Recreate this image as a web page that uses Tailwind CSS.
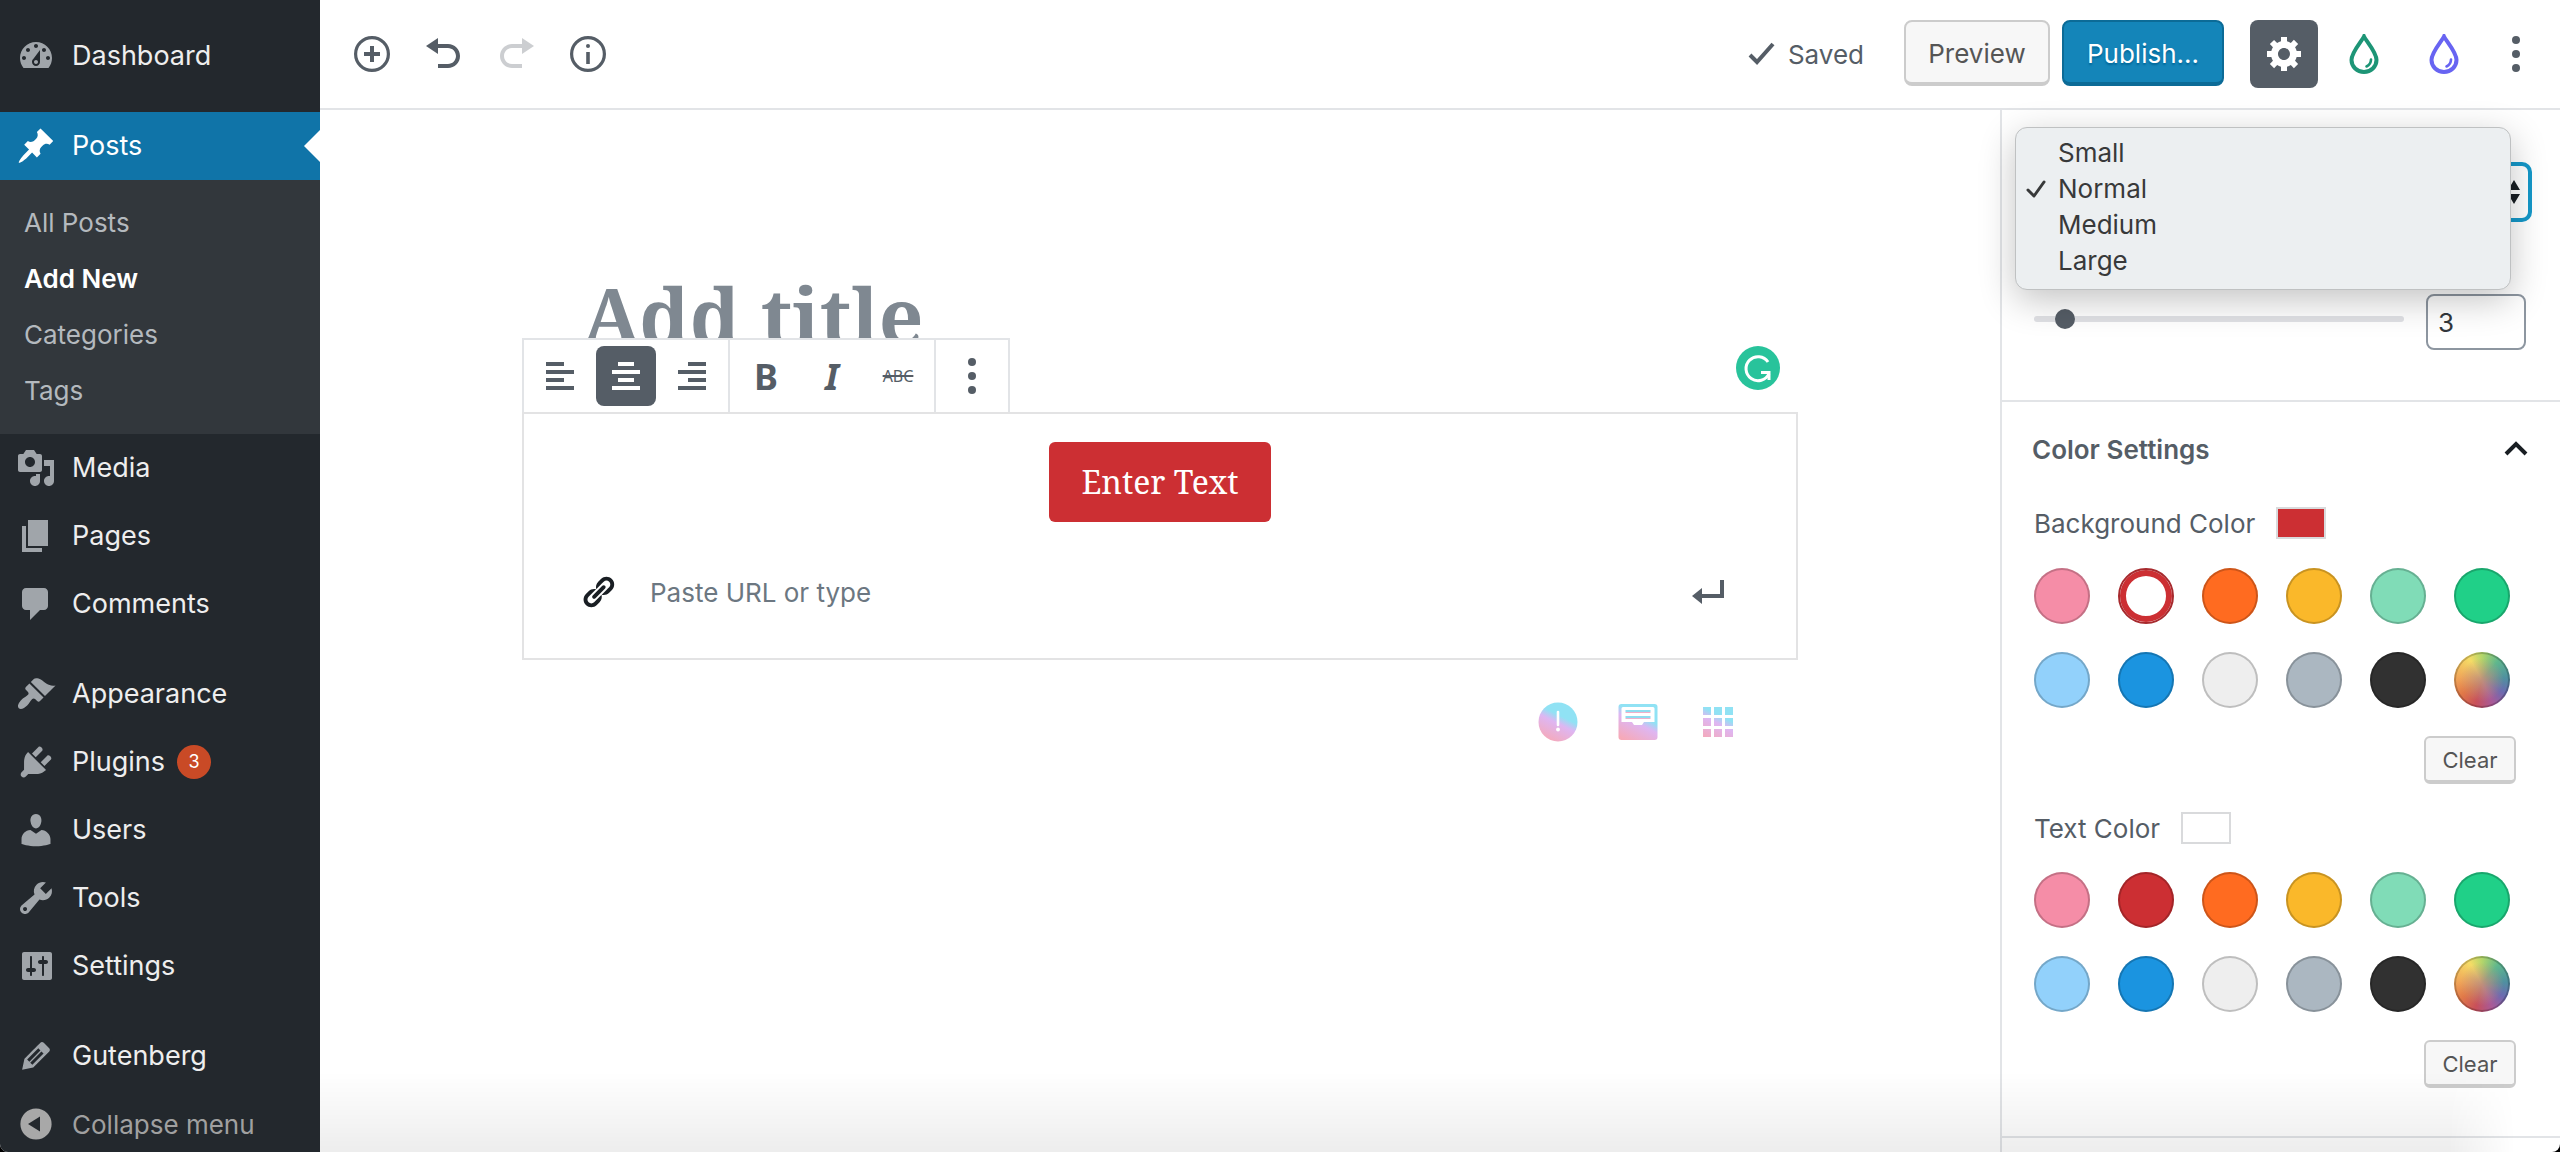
<!DOCTYPE html>
<html lang="en">
<head>
<meta charset="utf-8">
<title>Add New Post</title>
<script src="https://cdn.jsdelivr.net/npm/@tailwindcss/browser@4"></script>
</head>
<body class="h-screen overflow-hidden bg-black font-['Inter',sans-serif] text-[26px] text-[#555d66]">
<div class="flex h-full overflow-hidden rounded-b-lg bg-white">

  <!-- Admin menu -->
  <nav class="w-[320px] shrink-0 overflow-hidden bg-[#23282d] pt-[22px] text-[27px] text-[#eee]" aria-label="Main menu">
    <a href="#" class="mb-[22px] flex h-[68px] items-center gap-4 pl-4">
      <svg class="size-10 fill-[#a0a5aa]" viewBox="0 0 20 20"><path fill-rule="evenodd" d="M3.76 16h12.48c1.1-1.37 1.76-3.11 1.76-5 0-4.42-3.58-8-8-8s-8 3.58-8 8c0 1.89.66 3.63 1.76 5zM10 4c.55 0 1 .45 1 1s-.45 1-1 1-1-.45-1-1 .45-1 1-1zM6 6c.55 0 1 .45 1 1s-.45 1-1 1-1-.45-1-1 .45-1 1-1zm8 0c.55 0 1 .45 1 1s-.45 1-1 1-1-.45-1-1 .45-1 1-1zm-5.37 5.55L12 7v6c0 1.1-.9 2-2 2s-2-.9-2-2c0-.57.24-1.08.63-1.45zM4 10c.55 0 1 .45 1 1s-.45 1-1 1-1-.45-1-1 .45-1 1-1zm12 0c.55 0 1 .45 1 1s-.45 1-1 1-1-.45-1-1 .45-1 1-1zm-5 3c0-.55-.45-1-1-1s-1 .45-1 1 .45 1 1 1 1-.45 1-1z"/></svg>
      Dashboard
    </a>
    <a href="#" class="relative flex h-[68px] items-center gap-4 bg-[#1074a8] pl-4 text-white">
      <svg class="size-10 fill-white" viewBox="0 0 20 20"><path d="M10.44 3.02l1.82-1.82 6.36 6.35-1.83 1.82c-1.05-.68-2.48-.57-3.41.36l-.75.75c-.92.93-1.04 2.35-.35 3.41l-1.83 1.82-2.41-2.41-2.8 2.79c-.42.42-3.38 2.71-3.8 2.29s1.86-3.39 2.28-3.81l2.79-2.79L4.1 9.36l1.83-1.82c1.05.69 2.48.57 3.4-.36l.75-.75c.93-.92 1.05-2.35.36-3.41z"/></svg>
      Posts
      <span class="absolute top-[18px] right-0 border-y-[16px] border-r-[16px] border-y-transparent border-r-white"></span>
    </a>
    <div class="flex flex-col bg-[#32373c] pt-[15px] pb-[15px] pl-6 text-[26px] leading-[56px] text-[#b4b9be]">
      <a href="#">All Posts</a>
      <a href="#" class="font-semibold text-white">Add New</a>
      <a href="#">Categories</a>
      <a href="#">Tags</a>
    </div>
    <a href="#" class="flex h-[68px] items-center gap-4 pl-4">
      <svg class="size-10 fill-[#a0a5aa]" viewBox="0 0 20 20"><path fill-rule="evenodd" d="M13 11V4c0-.55-.45-1-1-1h-1.67L9 1H5L3.67 3H2c-.55 0-1 .45-1 1v7c0 .55.45 1 1 1h10c.55 0 1-.45 1-1zM7 4.5c1.38 0 2.5 1.12 2.5 2.5S8.38 9.5 7 9.5 4.5 8.38 4.5 7 5.62 4.5 7 4.5zM14 6h5v10.5c0 1.38-1.12 2.5-2.5 2.5S14 17.88 14 16.5s1.12-2.5 2.5-2.5c.17 0 .34.02.5.05V9h-3V6zm-4 8.05V13h2v3.5c0 1.38-1.12 2.5-2.5 2.5S7 17.88 7 16.5 8.12 14 9.5 14c.17 0 .34.02.5.05z"/></svg>
      Media
    </a>
    <a href="#" class="flex h-[68px] items-center gap-4 pl-4">
      <svg class="size-10 fill-[#a0a5aa]" viewBox="0 0 20 20"><path d="M6 15V2h10v13H6zm-1 1h8v2H3V5h2v11z"/></svg>
      Pages
    </a>
    <a href="#" class="mb-[22px] flex h-[68px] items-center gap-4 pl-4">
      <svg class="size-10 fill-[#a0a5aa]" viewBox="0 0 20 20"><path d="M5 2h9c1.1 0 2 .9 2 2v7c0 1.1-.9 2-2 2h-2l-5 5v-5H5c-1.1 0-2-.9-2-2V4c0-1.1.9-2 2-2z"/></svg>
      Comments
    </a>
    <a href="#" class="flex h-[68px] items-center gap-4 pl-4">
      <svg class="size-10 fill-[#a0a5aa]" viewBox="0 0 20 20"><path d="M14.48 11.06L7.41 3.99l1.5-1.5c.5-.56 2.3-.47 3.51.32 1.21.8 1.43 1.28 2.91 2.1 1.18.64 2.45 1.26 4.45.85zm-.71.71L6.7 4.7 4.93 6.47c-.39.39-.39 1.02 0 1.41l1.06 1.06c.39.39.39 1.03 0 1.42-.6.6-1.43 1.11-2.21 1.69-.35.26-.7.53-1.01.84C1.43 14.23.4 16.08 1.4 17.07c.99 1 2.84-.03 4.18-1.36.31-.31.58-.66.85-1.02.57-.78 1.08-1.61 1.69-2.21.39-.39 1.02-.39 1.41 0l1.06 1.06c.39.39 1.02.39 1.41 0z"/></svg>
      Appearance
    </a>
    <a href="#" class="flex h-[68px] items-center gap-4 pl-4">
      <svg class="size-10 fill-[#a0a5aa]" viewBox="0 0 20 20"><path d="M13.11 4.36L9.87 7.6 8 5.73l3.24-3.24c.35-.34 1.05-.2 1.56.32.52.51.66 1.21.31 1.55zm-8 1.77l.91-1.12 9.01 9.01-1.19.84c-.71.71-2.63 1.16-3.82 1.16H6.14L4.9 17.26c-.59.59-1.54.59-2.12 0-.59-.58-.59-1.53 0-2.12l1.24-1.24v-3.88c0-1.13.4-3.19 1.09-3.89zm7.26 3.97l3.24-3.24c.34-.35 1.04-.21 1.55.31.52.51.66 1.21.31 1.55l-3.24 3.25z"/></svg>
      <span class="flex items-center gap-3">Plugins <span class="size-[34px] rounded-full bg-[#c94a26] text-center text-[18px] leading-[34px] text-white">3</span></span>
    </a>
    <a href="#" class="flex h-[68px] items-center gap-4 pl-4">
      <svg class="size-10 fill-[#a0a5aa]" viewBox="0 0 20 20"><path d="M10 9.25c-2.27 0-2.73-3.44-2.73-3.44C7 4.02 7.82 2 9.97 2c2.16 0 2.98 2.02 2.71 3.81 0 0-.41 3.44-2.68 3.44zm0 2.57L12.72 10c2.39 0 4.52 2.33 4.52 4.53v2.49s-3.65 1.13-7.24 1.13c-3.65 0-7.24-1.13-7.24-1.13v-2.49c0-2.25 1.94-4.48 4.47-4.48z"/></svg>
      Users
    </a>
    <a href="#" class="flex h-[68px] items-center gap-4 pl-4">
      <svg class="size-10 fill-[#a0a5aa]" viewBox="0 0 20 20"><path fill-rule="evenodd" d="M16.68 9.77c-1.34 1.34-3.3 1.67-4.95.99l-5.41 6.52c-.99.99-2.59.99-3.58 0s-.99-2.59 0-3.57l6.52-5.42c-.68-1.65-.35-3.61.99-4.95 1.28-1.28 3.12-1.62 4.72-1.06l-2.89 2.89 2.82 2.82 2.86-2.87c.53 1.58.18 3.39-1.08 4.65zM3.81 16.21c.4.39 1.04.39 1.43 0 .4-.4.4-1.04 0-1.43-.39-.4-1.03-.4-1.43 0-.39.39-.39 1.03 0 1.43z"/></svg>
      Tools
    </a>
    <a href="#" class="mb-[22px] flex h-[68px] items-center gap-4 pl-4">
      <svg class="size-10 fill-[#a0a5aa]" viewBox="0 0 20 20"><path fill-rule="evenodd" d="M18 16V4c0-.55-.45-1-1-1H4c-.55 0-1 .45-1 1v12c0 .55.45 1 1 1h13c.55 0 1-.45 1-1zM8 11h1c.55 0 1 .45 1 1s-.45 1-1 1H8v1.5c0 .28-.22.5-.5.5s-.5-.22-.5-.5V13H6c-.55 0-1-.45-1-1s.45-1 1-1h1V5.5c0-.28.22-.5.5-.5s.5.22.5.5V11zm6-2v5.5c0 .28-.22.5-.5.5s-.5-.22-.5-.5V9h-1c-.55 0-1-.45-1-1s.45-1 1-1h1V5.5c0-.28.22-.5.5-.5s.5.22.5.5V7h1c.55 0 1 .45 1 1s-.45 1-1 1h-1z"/></svg>
      Settings
    </a>
    <a href="#" class="flex h-[68px] items-center gap-4 pl-4">
      <svg class="size-10 fill-[#a0a5aa]" viewBox="0 0 20 20"><path fill-rule="evenodd" d="M13.89 3.39l2.71 2.72c.46.46.42 1.24.03 1.64l-8.01 8.02-5.56 1.16 1.16-5.58s7.6-7.63 7.99-8.03c.39-.39 1.22-.39 1.68.07zm-2.73 2.79l-5.59 5.61 1.11 1.11 5.54-5.65zm-2.97 8.23l5.58-5.6-1.07-1.08-5.59 5.6z"/></svg>
      Gutenberg
    </a>
    <button type="button" class="flex h-[68px] w-full items-center gap-4 pl-4 text-[26px] text-[#a0a0a0]">
      <svg class="size-10" viewBox="0 0 20 20"><circle cx="10" cy="10" r="7.8" fill="#a8a8a8"/><path d="M12 6.2v7.6L6 10z" fill="#23282d"/></svg>
      Collapse menu
    </button>
  </nav>

  <div class="relative flex min-w-0 flex-1 flex-col">
    <!-- Top bar -->
    <header class="flex h-[110px] shrink-0 items-start justify-between border-b-2 border-[#e2e4e7] pt-5 pr-[18px] pl-4">
      <div class="flex">
        <button type="button" aria-label="Add block" class="flex h-[68px] w-[72px] items-center justify-center"><svg class="size-10" viewBox="0 0 20 20" fill="none" stroke="#555d66"><circle cx="10" cy="10" r="8.2" stroke-width="1.6"/><path d="M10 6v8M6 10h8" stroke-width="2"/></svg></button>
        <button type="button" aria-label="Undo" class="flex h-[68px] w-[72px] items-center justify-center"><svg class="size-10 fill-[#555d66]" viewBox="0 0 20 20"><path d="M12 5H7V2L1 6l6 4V7h5c2.2 0 4 1.8 4 4s-1.8 4-4 4H7v2h5c3.3 0 6-2.7 6-6s-2.7-6-6-6z"/></svg></button>
        <button type="button" aria-label="Redo" class="flex h-[68px] w-[72px] items-center justify-center"><svg class="size-10 fill-[#ccced1]" viewBox="0 0 20 20"><path d="M8 5h5V2l6 4-6 4V7H8c-2.2 0-4 1.8-4 4s1.8 4 4 4h5v2H8c-3.3 0-6-2.7-6-6s2.7-6 6-6z"/></svg></button>
        <button type="button" aria-label="Content structure" class="flex h-[68px] w-[72px] items-center justify-center"><svg class="size-10" viewBox="0 0 20 20"><circle cx="10" cy="10" r="8.2" stroke-width="1.6" fill="none" stroke="#555d66"/><path d="M9.1 9h1.8v6H9.1z" fill="#555d66"/><circle cx="10" cy="6" r="1" fill="#555d66"/></svg></button>
      </div>
      <div class="flex">
        <span class="mr-10 flex h-[68px] items-center gap-3"><svg class="h-11 w-7" viewBox="0 0 28 44" fill="none" stroke="#555d66" stroke-width="4"><path d="M2 23l7 7L25 12"/></svg>Saved</span>
        <button type="button" class="mr-3 h-[66px] w-[146px] rounded-lg border-2 border-b-4 border-[#ccc] bg-[#f7f7f7] pt-[2px] text-[#555]">Preview</button>
        <button type="button" class="mr-[26px] h-[66px] w-[162px] rounded-lg border-2 border-b-4 border-[#0c6b97] bg-[#1485b9] pt-[2px] text-white [text-shadow:0_2px_2px_#006799]">Publish…</button>
        <button type="button" aria-label="Settings" class="mr-3 flex size-[68px] items-center justify-center rounded-lg bg-[#555d66]"><svg class="size-10 fill-white" viewBox="-0.5 0.5 20 20"><path fill-rule="evenodd" d="M18 12h-2.18c-.17.7-.44 1.35-.81 1.93l1.54 1.54-2.1 2.1-1.54-1.54c-.58.36-1.23.63-1.91.79V19H8v-2.18c-.68-.16-1.33-.43-1.91-.79l-1.54 1.54-2.12-2.12 1.54-1.54c-.36-.58-.63-1.23-.79-1.91H1V9.03h2.17c.16-.7.44-1.35.8-1.94L2.43 5.55l2.1-2.1 1.54 1.54c.58-.37 1.24-.64 1.93-.81V2h3v2.18c.68.16 1.33.43 1.91.79l1.54-1.54 2.12 2.12-1.54 1.54c.36.59.64 1.24.8 1.94H18V12zm-8.5 1.5c1.66 0 3-1.34 3-3s-1.34-3-3-3-3 1.34-3 3 1.34 3 3 3z"/></svg></button>
        <button type="button" aria-label="Block styles" class="mr-3 flex size-[68px] items-center justify-center"><svg class="h-10 w-[30px]" viewBox="0 0 30 40" fill="none" stroke="#1d9576"><path d="M15 2.5C13 7 2.5 18 2.5 26a12.5 12 0 0 0 25 0C27.5 18 17 7 15 2.5z" stroke-width="4"/><path d="M22 25.5c0 3-1.5 5.500-4.5 7" stroke-width="2.6" stroke-linecap="round"/></svg></button>
        <button type="button" aria-label="Page styles" class="mr-3 flex size-[68px] items-center justify-center"><svg class="h-10 w-[30px]" viewBox="0 0 30 40" fill="none" stroke="#6864f2"><path d="M15 2.5C13 7 2.5 18 2.5 26a12.5 12 0 0 0 25 0C27.5 18 17 7 15 2.5z" stroke-width="4"/><path d="M22 25.5c0 3-1.5 5.500-4.5 7" stroke-width="2.6" stroke-linecap="round"/></svg></button>
        <button type="button" aria-label="More" class="flex h-[68px] w-[52px] items-center justify-center"><svg class="size-10 fill-[#555d66]" viewBox="0 0 40 40"><circle cx="20" cy="6" r="4"/><circle cx="20" cy="20" r="4"/><circle cx="20" cy="34" r="4"/></svg></button>
      </div>
    </header>

    <div class="flex min-h-0 flex-1">
      <!-- Editor canvas -->
      <main class="flex-1 overflow-hidden pt-[151px]">
        <div class="mx-auto max-w-[1276px]">
          <input type="text" aria-label="Title" placeholder="Add title" class="block h-[108px] w-full pl-[60px] font-['Noto_Serif','DejaVu_Serif',serif] text-[78px] font-bold placeholder:text-[#7f8891] placeholder:opacity-100">
          <div class="relative -mt-[31px] flex items-start justify-between pr-[18px]">
            <div class="flex border-2 border-b-0 border-[#e2e4e7] bg-white" role="toolbar" aria-label="Block tools">
              <div class="flex gap-[6px] border-r-2 border-[#e2e4e7] p-[6px]">
                <button type="button" aria-label="Align left" class="flex size-[60px] items-center justify-center"><svg class="h-7 w-7" viewBox="0 0 28 28" stroke="#555d66" stroke-width="4"><path d="M0 2h18M0 10h28M0 18h18M0 26h28"/></svg></button>
                <button type="button" aria-label="Align center" class="flex size-[60px] items-center justify-center rounded-lg bg-[#555d66]"><svg class="h-7 w-7" viewBox="0 0 28 28" stroke="#fff" stroke-width="4"><path d="M6 2h16M0 10h28M6 18h16M0 26h28"/></svg></button>
                <button type="button" aria-label="Align right" class="flex size-[60px] items-center justify-center"><svg class="h-7 w-7" viewBox="0 0 28 28" stroke="#555d66" stroke-width="4"><path d="M10 2h18M0 10h28M10 18h18M0 26h28"/></svg></button>
              </div>
              <div class="flex gap-[6px] border-r-2 border-[#e2e4e7] p-[6px] font-['Noto_Sans',sans-serif]">
                <button type="button" aria-label="Bold" class="size-[60px] pt-[2px] text-[36px] leading-[58px] font-bold">B</button>
                <button type="button" aria-label="Italic" class="size-[60px] pt-[2px] text-[36px] leading-[58px] font-bold italic">I</button>
                <button type="button" aria-label="Strikethrough" class="size-[60px] text-[16px] leading-[60px] line-through decoration-2">ABC</button>
              </div>
              <div class="p-[6px]">
                <button type="button" aria-label="More options" class="flex size-[60px] items-center justify-center"><svg class="size-10 fill-[#555d66]" viewBox="0 0 40 40"><circle cx="20" cy="6" r="4"/><circle cx="20" cy="20" r="4"/><circle cx="20" cy="34" r="4"/></svg></button>
              </div>
            </div>
            <svg class="mt-2 size-11" viewBox="0 0 44 44"><circle cx="22" cy="22" r="22" fill="#28c39b"/><path d="M32 16A12 12 0 1 0 33 27.5" fill="none" stroke="#fff" stroke-width="3"/><path d="M25 26.5h8V34" fill="none" stroke="#fff" stroke-width="3"/></svg>
          </div>
          <section class="border-2 border-[#e3e3e4] pt-7 pb-[46px]">
            <div class="text-center font-['Noto_Serif','DejaVu_Serif',serif]">
              <button type="button" class="h-20 rounded-md bg-[#cc2f33] px-8 text-[32px] text-white">Enter Text</button>
            </div>
            <form class="mt-[50px] flex items-center gap-[34px] pr-[68px] pl-14">
              <svg class="size-9 fill-[#191e23]" viewBox="0 0 20 20"><path d="M17.74 2.76c1.68 1.69 1.68 4.41 0 6.1l-1.53 1.52c-1.12 1.12-2.7 1.47-4.14 1.09l2.62-2.61.76-.77.76-.76c.84-.84.84-2.2 0-3.04-.84-.85-2.2-.85-3.04 0l-.77.76-3.38 3.38c-.37-1.44-.02-3.02 1.1-4.14l1.52-1.53c1.69-1.68 4.42-1.68 6.1 0zM8.59 13.43l5.34-5.34c.42-.42.42-1.1 0-1.52-.44-.43-1.13-.39-1.53 0l-5.33 5.34c-.42.42-.42 1.1 0 1.52.44.43 1.13.39 1.52 0zm-.76 2.29l4.14-4.15c.38 1.44.03 3.02-1.09 4.14l-1.52 1.53c-1.69 1.68-4.41 1.68-6.1 0-1.68-1.68-1.68-4.42 0-6.1l1.53-1.52c1.12-1.12 2.7-1.47 4.14-1.1l-4.14 4.15c-.85.84-.85 2.2 0 3.05.84.84 2.2.84 3.04 0z"/></svg>
              <input type="text" aria-label="URL" placeholder="Paste URL or type" class="h-10 min-w-0 flex-1 placeholder:text-[#6c7781] placeholder:opacity-100">
              <button type="submit" aria-label="Apply"><svg class="size-10 fill-[#555d66]" viewBox="0 0 20 20"><path d="M16 4h2v9H7v3l-5-4 5-4v3h9V4z"/></svg></button>
            </form>
          </section>
          <div class="mt-[42px] flex justify-end gap-10 pr-[60px]">
            <svg class="size-10" viewBox="0 0 40 40"><defs><linearGradient id="candy" gradientUnits="userSpaceOnUse" x1="30" y1="4" x2="12" y2="40"><stop offset="0.3" stop-color="#90e2f4"/><stop offset="0.5" stop-color="#deb6f2"/><stop offset="1" stop-color="#f6a9b8"/></linearGradient></defs><circle cx="20" cy="20" r="19.5" fill="url(#candy)"/><path d="M20 10v13" stroke="#fff" stroke-width="2.6" stroke-linecap="round"/><circle cx="20" cy="27.5" r="1.9" fill="#fff"/></svg>
            <svg class="size-10" viewBox="0 0 40 40"><rect x="0.5" y="2" width="39" height="36" rx="3" fill="url(#candy)"/><path d="M3.5 6.5a1.5 1.5 0 0 1 1.5-1.5h30a1.5 1.5 0 0 1 1.5 1.5V20H26l-2 3h-8l-2-3H3.5z" fill="#fff"/><path d="M7.5 9h25M7.5 15h25" stroke="#90dcf0" stroke-width="2"/><path d="M7.5 10.5h25M7.5 16.5h25" stroke="#eeb0cc" stroke-width="1"/></svg>
            <svg class="size-10" viewBox="0 0 40 40" fill="url(#candy)"><path d="M5 5h8v8H5zM16 5h8v8h-8zM27 5h8v8h-8zM5 16h8v8H5zM16 16h8v8h-8zM27 16h8v8h-8zM5 27h8v8H5zM16 27h8v8h-8zM27 27h8v8h-8z"/></svg>
          </div>
        </div>
      </main>

      <!-- Block settings -->
      <aside class="relative w-[560px] shrink-0 border-l-2 border-[#e2e4e7]">
        <section class="border-b-2 border-[#e2e4e7] pt-[13px] pr-7 pb-[50px] pl-8">
          <label for="size" class="block leading-8 text-[#191e23]">Size</label>
          <div class="relative mt-[7px]">
            <select id="size" class="h-[60px] w-full appearance-none rounded-[10px] border-4 border-[#1598c9] bg-white px-3">
              <option>Small</option><option selected>Normal</option><option>Medium</option><option>Large</option>
            </select>
            <svg class="pointer-events-none absolute top-[18px] right-3 h-6 w-3 fill-[#191e23]" viewBox="0 0 12 24"><path d="M6 0l6 10H0zM6 24l6-10H0z"/></svg>
          </div>
          <div class="mt-[72px] flex items-start gap-[22px] pr-[6px]">
            <input type="range" aria-label="Border radius" min="0" max="50" value="3" class="mt-[15px] h-5 min-w-0 flex-1 appearance-none bg-transparent [&::-webkit-slider-runnable-track]:h-[6px] [&::-webkit-slider-runnable-track]:rounded-full [&::-webkit-slider-runnable-track]:bg-[#e0e1e5] [&::-webkit-slider-thumb]:-mt-[7px] [&::-webkit-slider-thumb]:size-5 [&::-webkit-slider-thumb]:appearance-none [&::-webkit-slider-thumb]:rounded-full [&::-webkit-slider-thumb]:bg-[#555d66]">
            <input type="number" aria-label="Border radius value" value="3" class="h-14 w-[100px] appearance-none rounded-lg border-2 border-[#8d96a0] px-[10px] text-[#32373c]">
          </div>
        </section>

        <section class="border-b-2 border-[#e2e4e7] pb-12">
          <button type="button" class="flex h-[94px] w-full items-center justify-between pr-6 pl-[30px] font-semibold">Color Settings
            <svg class="size-10" viewBox="0 0 40 40" fill="none" stroke="#191e23" stroke-width="4"><path d="M10 25l10-10 10 10"/></svg>
          </button>
          <div class="pt-[11px] pl-8">
            <div class="flex h-8 items-center gap-[21px]">Background Color <span class="h-8 w-[50px] border-2 border-[#d9dadc] bg-[#cc2f33]"></span></div>
            <div class="mt-[29px] grid grid-cols-[repeat(6,56px)] gap-7">
              <button type="button" aria-label="Pale pink" class="size-14 rounded-full bg-[#f58da7] inset-shadow-[0_0_0_2px_rgba(0,0,0,0.2)]"></button>
              <button type="button" aria-label="Vivid red, selected" class="size-14 rounded-full border-2 border-[#a72a2e] bg-white inset-shadow-[0_0_0_6px_#cc2f33]"></button>
              <button type="button" aria-label="Orange" class="size-14 rounded-full bg-[#ff6b20] inset-shadow-[0_0_0_2px_rgba(0,0,0,0.2)]"></button>
              <button type="button" aria-label="Amber" class="size-14 rounded-full bg-[#fab82a] inset-shadow-[0_0_0_2px_rgba(0,0,0,0.2)]"></button>
              <button type="button" aria-label="Light green" class="size-14 rounded-full bg-[#80dcb7] inset-shadow-[0_0_0_2px_rgba(0,0,0,0.2)]"></button>
              <button type="button" aria-label="Green" class="size-14 rounded-full bg-[#20d088] inset-shadow-[0_0_0_2px_rgba(0,0,0,0.2)]"></button>
              <button type="button" aria-label="Pale blue" class="size-14 rounded-full bg-[#92d1fb] inset-shadow-[0_0_0_2px_rgba(0,0,0,0.2)]"></button>
              <button type="button" aria-label="Blue" class="size-14 rounded-full bg-[#1b94e0] inset-shadow-[0_0_0_2px_rgba(0,0,0,0.2)]"></button>
              <button type="button" aria-label="Light gray" class="size-14 rounded-full bg-[#eee] inset-shadow-[0_0_0_2px_rgba(0,0,0,0.2)]"></button>
              <button type="button" aria-label="Gray" class="size-14 rounded-full bg-[#abb7c1] inset-shadow-[0_0_0_2px_rgba(0,0,0,0.2)]"></button>
              <button type="button" aria-label="Dark gray" class="size-14 rounded-full bg-[#313131] inset-shadow-[0_0_0_2px_rgba(0,0,0,0.2)]"></button>
              <button type="button" aria-label="Custom color" class="size-14 rounded-full bg-[radial-gradient(circle,#c0907a_0%,#c0907a00_55%),conic-gradient(#b4d66a_0deg,#5fb78d_40deg,#4f90a0_85deg,#6c6bb0_120deg,#a85a98_155deg,#c8505a_195deg,#e07848_235deg,#f0a558_275deg,#f5dc66_330deg,#b4d66a_360deg)] inset-shadow-[0_0_0_2px_rgba(0,0,0,0.2)]"></button>
            </div>
            <div class="mt-7 flex justify-end pr-11"><button type="button" class="h-12 w-[92px] rounded-md border-2 border-b-4 border-[#ccc] bg-[#f7f7f7] pt-[2px] text-[22px] leading-none text-[#555]">Clear</button></div>
            <div class="mt-7 flex h-8 items-center gap-[21px]">Text Color <span class="h-8 w-[50px] border-2 border-[#d9dadc] bg-white"></span></div>
            <div class="mt-7 grid grid-cols-[repeat(6,56px)] gap-7">
              <button type="button" aria-label="Pale pink" class="size-14 rounded-full bg-[#f58da7] inset-shadow-[0_0_0_2px_rgba(0,0,0,0.2)]"></button>
              <button type="button" aria-label="Vivid red" class="size-14 rounded-full bg-[#cc2f33] inset-shadow-[0_0_0_2px_rgba(0,0,0,0.2)]"></button>
              <button type="button" aria-label="Orange" class="size-14 rounded-full bg-[#ff6b20] inset-shadow-[0_0_0_2px_rgba(0,0,0,0.2)]"></button>
              <button type="button" aria-label="Amber" class="size-14 rounded-full bg-[#fab82a] inset-shadow-[0_0_0_2px_rgba(0,0,0,0.2)]"></button>
              <button type="button" aria-label="Light green" class="size-14 rounded-full bg-[#80dcb7] inset-shadow-[0_0_0_2px_rgba(0,0,0,0.2)]"></button>
              <button type="button" aria-label="Green" class="size-14 rounded-full bg-[#20d088] inset-shadow-[0_0_0_2px_rgba(0,0,0,0.2)]"></button>
              <button type="button" aria-label="Pale blue" class="size-14 rounded-full bg-[#92d1fb] inset-shadow-[0_0_0_2px_rgba(0,0,0,0.2)]"></button>
              <button type="button" aria-label="Blue" class="size-14 rounded-full bg-[#1b94e0] inset-shadow-[0_0_0_2px_rgba(0,0,0,0.2)]"></button>
              <button type="button" aria-label="Light gray" class="size-14 rounded-full bg-[#eee] inset-shadow-[0_0_0_2px_rgba(0,0,0,0.2)]"></button>
              <button type="button" aria-label="Gray" class="size-14 rounded-full bg-[#abb7c1] inset-shadow-[0_0_0_2px_rgba(0,0,0,0.2)]"></button>
              <button type="button" aria-label="Dark gray" class="size-14 rounded-full bg-[#313131] inset-shadow-[0_0_0_2px_rgba(0,0,0,0.2)]"></button>
              <button type="button" aria-label="Custom color" class="size-14 rounded-full bg-[radial-gradient(circle,#c0907a_0%,#c0907a00_55%),conic-gradient(#b4d66a_0deg,#5fb78d_40deg,#4f90a0_85deg,#6c6bb0_120deg,#a85a98_155deg,#c8505a_195deg,#e07848_235deg,#f0a558_275deg,#f5dc66_330deg,#b4d66a_360deg)] inset-shadow-[0_0_0_2px_rgba(0,0,0,0.2)]"></button>
            </div>
            <div class="mt-7 flex justify-end pr-11"><button type="button" class="h-12 w-[92px] rounded-md border-2 border-b-4 border-[#ccc] bg-[#f7f7f7] pt-[2px] text-[22px] leading-none text-[#555]">Clear</button></div>
          </div>
        </section>

        <!-- Open size menu -->
        <ul class="absolute top-[17px] left-[13px] w-[496px] rounded-xl border border-[#bfc1c2] bg-[#eceff1] pt-[7px] pb-[10px] leading-9 text-[#38393a] shadow-[0_10px_36px_rgba(0,0,0,0.24)]" role="listbox" aria-label="Size">
          <li role="option" class="pl-[42px]">Small</li>
          <li role="option" aria-selected="true" class="flex items-center gap-3 pl-[10px]"><svg class="size-5" viewBox="0 0 20 20" fill="none" stroke="#38393a" stroke-width="3" stroke-linecap="round" stroke-linejoin="round"><path d="M2 11l6 6L18 3"/></svg>Normal</li>
          <li role="option" class="pl-[42px]">Medium</li>
          <li role="option" class="pl-[42px]">Large</li>
        </ul>
      </aside>
    </div>

    <!-- Shade along the bottom edge -->
    <div class="pointer-events-none absolute bottom-0 left-0 h-20 w-[98%] bg-linear-to-t from-black/7 to-transparent [mask-image:linear-gradient(to_right,black_97%,transparent)]"></div>
  </div>
</div>
</body>
</html>
